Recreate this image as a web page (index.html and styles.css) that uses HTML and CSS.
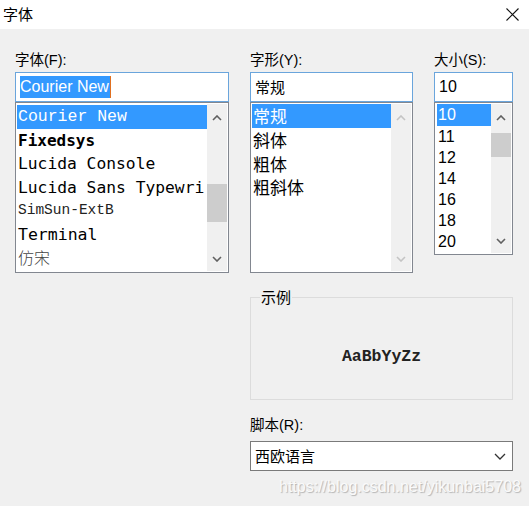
FILE: index.html
```html
<!DOCTYPE html>
<html lang="zh-CN">
<head>
<meta charset="utf-8">
<title>字体</title>
<link rel="stylesheet" href="styles.css">
</head>
<body>
<div class="dialog">
  <header class="titlebar">
    <span class="title">字体</span>
    <svg class="close" width="13" height="13" viewBox="0 0 13 13"><path d="M0.5 0.5L12.5 12.5M12.5 0.5L0.5 12.5" stroke="#111" stroke-width="1.1" fill="none"/></svg>
  </header>
  <main class="content">
    <section class="col col-font">
      <label class="lbl">字体(F):</label>
      <div class="textbox focus"><span class="sel">Courier New</span><span class="caret"></span></div>
      <div class="listbox tall">
        <ul class="items font-items">
          <li class="hl f-courier">Courier New</li>
          <li class="f-fixed">Fixedsys</li>
          <li class="f-lucida">Lucida Console</li>
          <li class="f-lucida">Lucida Sans Typewri</li>
          <li class="f-simsun">SimSun-ExtB</li>
          <li class="f-terminal">Terminal</li>
          <li class="f-fangsong">仿宋</li>
        </ul>
        <div class="scrollbar">
          <svg class="arrow up" width="10" height="6" viewBox="0 0 10 6"><path d="M1 5L5 1L9 5" stroke="#606060" stroke-width="1.6" fill="none"/></svg>
          <div class="thumb thumb-font"></div>
          <svg class="arrow down" width="10" height="6" viewBox="0 0 10 6"><path d="M1 1L5 5L9 1" stroke="#606060" stroke-width="1.6" fill="none"/></svg>
        </div>
      </div>
    </section>
    <section class="col col-style">
      <label class="lbl">字形(Y):</label>
      <div class="textbox focus"><span class="txt">常规</span></div>
      <div class="listbox tall">
        <ul class="items style-items">
          <li class="hl">常规</li>
          <li>斜体</li>
          <li>粗体</li>
          <li>粗斜体</li>
        </ul>
        <div class="scrollbar">
          <svg class="arrow up" width="10" height="6" viewBox="0 0 10 6"><path d="M1 5L5 1L9 5" stroke="#c4c4c4" stroke-width="1.6" fill="none"/></svg>
          <svg class="arrow down" width="10" height="6" viewBox="0 0 10 6"><path d="M1 1L5 5L9 1" stroke="#c4c4c4" stroke-width="1.6" fill="none"/></svg>
        </div>
      </div>
    </section>
    <section class="col col-size">
      <label class="lbl">大小(S):</label>
      <div class="textbox focus"><span class="txt num">10</span></div>
      <div class="listbox short">
        <ul class="items size-items">
          <li class="hl">10</li>
          <li>11</li>
          <li>12</li>
          <li>14</li>
          <li>16</li>
          <li>18</li>
          <li>20</li>
        </ul>
        <div class="scrollbar">
          <svg class="arrow up" width="10" height="6" viewBox="0 0 10 6"><path d="M1 5L5 1L9 5" stroke="#606060" stroke-width="1.6" fill="none"/></svg>
          <div class="thumb thumb-size"></div>
          <svg class="arrow down" width="10" height="6" viewBox="0 0 10 6"><path d="M1 1L5 5L9 1" stroke="#606060" stroke-width="1.6" fill="none"/></svg>
        </div>
      </div>
    </section>
    <section class="lower">
      <fieldset class="sample">
        <legend class="legend">示例</legend>
        <div class="sample-body">AaBbYyZz</div>
      </fieldset>
      <label class="lbl script-lbl">脚本(R):</label>
      <div class="combo">
        <span class="txt">西欧语言</span>
        <svg class="chev" width="12" height="7" viewBox="0 0 12 7"><path d="M1 1L6 6L11 1" stroke="#333" stroke-width="1.3" fill="none"/></svg>
      </div>
    </section>
  </main>
  <div class="watermark">https://blog.csdn.net/yikunbai5708</div>
</div>
</body>
</html>
```
FILE: styles.css
```css
* { box-sizing: border-box; }
html, body { margin: 0; padding: 0; }
body {
  width: 529px;
  height: 506px;
  overflow: hidden;
  background: #f0f0f0;
  font-family: "Liberation Sans", "Noto Sans CJK SC", sans-serif;
  color: #000;
}
.dialog { position: relative; width: 529px; height: 506px; }

.titlebar {
  height: 29px;
  background: #fff;
  display: flex;
  align-items: center;
  justify-content: space-between;
  padding: 0 10px 2px 3px;
}
.title {
  font-family: "Noto Sans CJK SC", sans-serif;
  font-size: 15px;
  line-height: 20px;
}
.close { display: block; margin-top: 1px; }

.content {
  display: grid;
  grid-template-columns: 214px 163px 79px;
  column-gap: 21px;
  padding: 21px 0 0 15px;
  align-items: start;
}
.col { display: flex; flex-direction: column; }

.lbl {
  display: block;
  font-family: "Liberation Sans", "Noto Sans CJK SC", sans-serif;
  font-size: 14.5px;
  line-height: 20px;
  height: 20px;
  margin-bottom: 2px;
}

.textbox {
  height: 30px;
  background: #fff;
  border: 1px solid #7a7a7a;
  display: flex;
  align-items: center;
  padding: 0 4px;
}
.textbox.focus { border-color: #6aa5dc; }
.sel {
  background: #3399ff;
  color: #fff;
  font-size: 16px;
  line-height: 22px;
  padding: 0 1px 0 0;
}
.caret {
  width: 1px;
  height: 22px;
  background: #e07020;
}
.txt {
  font-family: "Noto Sans CJK SC", sans-serif;
  font-size: 15px;
  line-height: 22px;
}
.txt.num { font-family: "Liberation Sans", sans-serif; font-size: 16px; }

.listbox {
  display: flex;
  background: #fff;
  border: 1px solid #828790;
  padding: 1px;
}
.listbox.tall { height: 171px; }
.listbox.short { height: 153px; }

.items {
  list-style: none;
  margin: 0;
  padding: 1px 0 0 0;
  flex: 1;
  min-width: 0;
  overflow: hidden;
}
.items li {
  white-space: nowrap;
  overflow: hidden;
  padding-left: 1px;
}
.items li.hl { background: #3399ff; color: #fff; }

.font-items li { height: 23.5px; line-height: 23.5px; }
.f-courier { font-family: "Liberation Mono", monospace; font-size: 16.5px; }
.f-fixed { font-family: "DejaVu Sans Mono", monospace; font-weight: bold; font-size: 16px; }
.f-lucida { font-family: "DejaVu Sans Mono", monospace; font-size: 16.3px; }
.f-simsun { font-family: "Liberation Mono", monospace; font-size: 14.5px; color: #222; }
.f-terminal { font-family: "DejaVu Sans Mono", monospace; font-size: 16.5px; }
.f-fangsong { font-family: "Noto Sans CJK SC", sans-serif; font-weight: 300; font-size: 16px; color: #444; }

.style-items { padding-top: 0; }
.style-items li {
  height: 23.5px;
  line-height: 24px;
  font-family: "Noto Sans CJK SC", sans-serif;
  font-size: 17px;
}
.style-items li.hl { height: 24px; }

.size-items { padding-top: 0; padding-left: 1px; }
.size-items li {
  height: 21px;
  line-height: 21px;
  font-family: "Liberation Sans", sans-serif;
  font-size: 16px;
}
.size-items li.hl { height: 22px; line-height: 22px; }

.scrollbar {
  width: 20px;
  flex: none;
  background: #f0f0f0;
  position: relative;
  display: flex;
  flex-direction: column;
  align-items: center;
  justify-content: space-between;
  padding: 11px 0 9px;
}
.arrow { display: block; }
.thumb {
  position: absolute;
  left: 0;
  width: 20px;
  background: #cdcdcd;
}
.thumb-font { top: 80px; height: 38px; }
.thumb-size { top: 29px; height: 24px; }

.lower {
  grid-column: 2 / 4;
  display: flex;
  flex-direction: column;
  padding-top: 14px;
}
.sample {
  margin: 0;
  padding: 0;
  border: 1px solid #dcdcdc;
  height: 113px;
  min-width: 0;
}
.legend {
  margin-left: 9px;
  padding: 0 1px;
  font-family: "Noto Sans CJK SC", sans-serif;
  font-size: 15px;
  line-height: 20px;
}
.sample-body {
  height: 91px;
  display: flex;
  align-items: center;
  justify-content: center;
  padding-top: 8px;
  font-family: "Liberation Mono", monospace;
  font-weight: bold;
  font-size: 16.5px;
  color: #222;
}
.script-lbl { margin-top: 15px; margin-bottom: 6px; }
.combo {
  height: 30px;
  background: #fff;
  border: 1px solid #7a7a7a;
  display: flex;
  align-items: center;
  justify-content: space-between;
  padding: 0 6px 0 4px;
}
.chev { display: block; }

.watermark {
  position: absolute;
  left: 279px;
  top: 477px;
  font-family: "Liberation Sans", sans-serif;
  font-size: 16px;
  line-height: 20px;
  color: #fafafa;
  text-shadow: 1px 1px 1px #b4b4b4;
  white-space: nowrap;
}
```
